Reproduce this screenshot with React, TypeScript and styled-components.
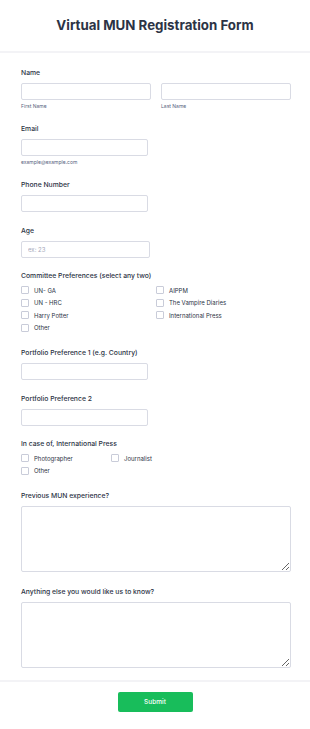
import styled, { createGlobalStyle } from 'styled-components';

const GlobalStyle = createGlobalStyle`
  html, body {
    margin: 0;
    padding: 0;
    background: #ffffff;
  }
  body {
    font-family: Inter, "Noto Sans", sans-serif;
    color: #2c3345;
  }
  * {
    box-sizing: border-box;
  }
`;

const Page = styled.div`
  width: 310px;
  min-height: 729px;
  background: #ffffff;
`;

const Header = styled.header`
  height: 53px;
  display: flex;
  align-items: center;
  justify-content: center;
  border-bottom: 2px solid #f3f3f6;
`;

const Title = styled.h1`
  margin: 0 0 1px;
  font-size: 13.3px;
  font-weight: 700;
  color: #2c3345;
`;

const Body = styled.div`
  padding: 15px 19px 0 21px;
`;

const Field = styled.div<{ $pb?: number }>`
  padding-bottom: ${(p) => p.$pb ?? 13.5}px;
`;

const Label = styled.label<{ $tight?: boolean }>`
  display: block;
  height: 10px;
  line-height: 10px;
  margin-bottom: ${(p) => (p.$tight ? '3px' : '5px')};
  font-size: 6.8px;
  font-weight: 500;
  color: #2c3345;
`;

const Row = styled.div`
  display: flex;
  gap: 10px;
`;

const Col = styled.div`
  flex: 1;
`;

const Input = styled.input<{ $w?: number }>`
  display: block;
  width: ${(p) => (p.$w ? `${p.$w}px` : '100%')};
  height: 17px;
  padding: 0 6px;
  border: 1px solid #d9dbe4;
  border-radius: 2px;
  font-family: inherit;
  font-size: 6px;
  color: #2c3345;
  outline: none;

  &::placeholder {
    color: #a5a8ba;
  }
`;

const Sublabel = styled.div`
  margin-top: 2px;
  height: 8px;
  line-height: 8px;
  font-size: 5px;
  color: #57647e;
`;

const Options = styled.div<{ $col: number }>`
  display: grid;
  grid-template-columns: ${(p) => `${p.$col}px ${p.$col}px`};
`;

const Option = styled.label`
  display: flex;
  align-items: center;
  gap: 5px;
  height: 12.5px;
  font-size: 6px;
  color: #2c3345;
`;

const Box = styled.span`
  width: 8px;
  height: 8px;
  border: 1px solid #c9ccd9;
  border-radius: 1px;
  background: #ffffff;
  flex: none;
`;

const TextArea = styled.textarea`
  display: block;
  width: 100%;
  height: 66px;
  border: 1px solid #d9dbe4;
  border-radius: 2px;
  font-family: inherit;
  font-size: 6px;
  resize: vertical;
  outline: none;
`;

const Footer = styled.footer`
  border-top: 2px solid #f3f3f6;
  padding: 10px 0 17px;
  display: flex;
  justify-content: center;
`;

const SubmitButton = styled.button`
  width: 75px;
  height: 20px;
  border: none;
  border-radius: 2px;
  background: #18bd5b;
  color: #ffffff;
  font-family: inherit;
  font-size: 6.5px;
  font-weight: 500;
  cursor: pointer;
`;

type Choice = { label: string };

function CheckGroup({ title, options, col }: { title: string; options: Choice[]; col: number }) {
  return (
    <Field $pb={14}>
      <Label $tight>{title}</Label>
      <Options $col={col}>
        {options.map((o) => (
          <Option key={o.label}>
            <Box />
            {o.label}
          </Option>
        ))}
      </Options>
    </Field>
  );
}

// grid fills row by row, so the list is ordered left, right, left, right
const committees: Choice[] = [
  { label: 'UN- GA' },
  { label: 'AIPPM' },
  { label: 'UN - HRC' },
  { label: 'The Vampire Diaries' },
  { label: 'Harry Potter' },
  { label: 'International Press' },
  { label: 'Other' },
];

const pressRoles: Choice[] = [
  { label: 'Photographer' },
  { label: 'Journalist' },
  { label: 'Other' },
];

export default function App() {
  return (
    <Page>
      <GlobalStyle />
      <Header>
        <Title>Virtual MUN Registration Form</Title>
      </Header>
      <Body>
        <Field $pb={14}>
          <Label>Name</Label>
          <Row>
            <Col>
              <Input />
              <Sublabel>First Name</Sublabel>
            </Col>
            <Col>
              <Input />
              <Sublabel>Last Name</Sublabel>
            </Col>
          </Row>
        </Field>

        <Field $pb={14}>
          <Label>Email</Label>
          <Input $w={127} />
          <Sublabel>example@example.com</Sublabel>
        </Field>

        <Field>
          <Label>Phone Number</Label>
          <Input $w={127} />
        </Field>

        <Field>
          <Label>Age</Label>
          <Input $w={129} placeholder="ex: 23" />
        </Field>

        <CheckGroup title="Committee Preferences (select any two)" options={committees} col={135} />

        <Field>
          <Label>Portfolio Preference 1 (e.g. Country)</Label>
          <Input $w={127} />
        </Field>

        <Field>
          <Label>Portfolio Preference 2</Label>
          <Input $w={127} />
        </Field>

        <CheckGroup title="In case of, International Press" options={pressRoles} col={90} />

        <Field $pb={15}>
          <Label>Previous MUN experience?</Label>
          <TextArea />
        </Field>

        <Field $pb={12}>
          <Label>Anything else you would like us to know?</Label>
          <TextArea />
        </Field>
      </Body>
      <Footer>
        <SubmitButton>Submit</SubmitButton>
      </Footer>
    </Page>
  );
}
